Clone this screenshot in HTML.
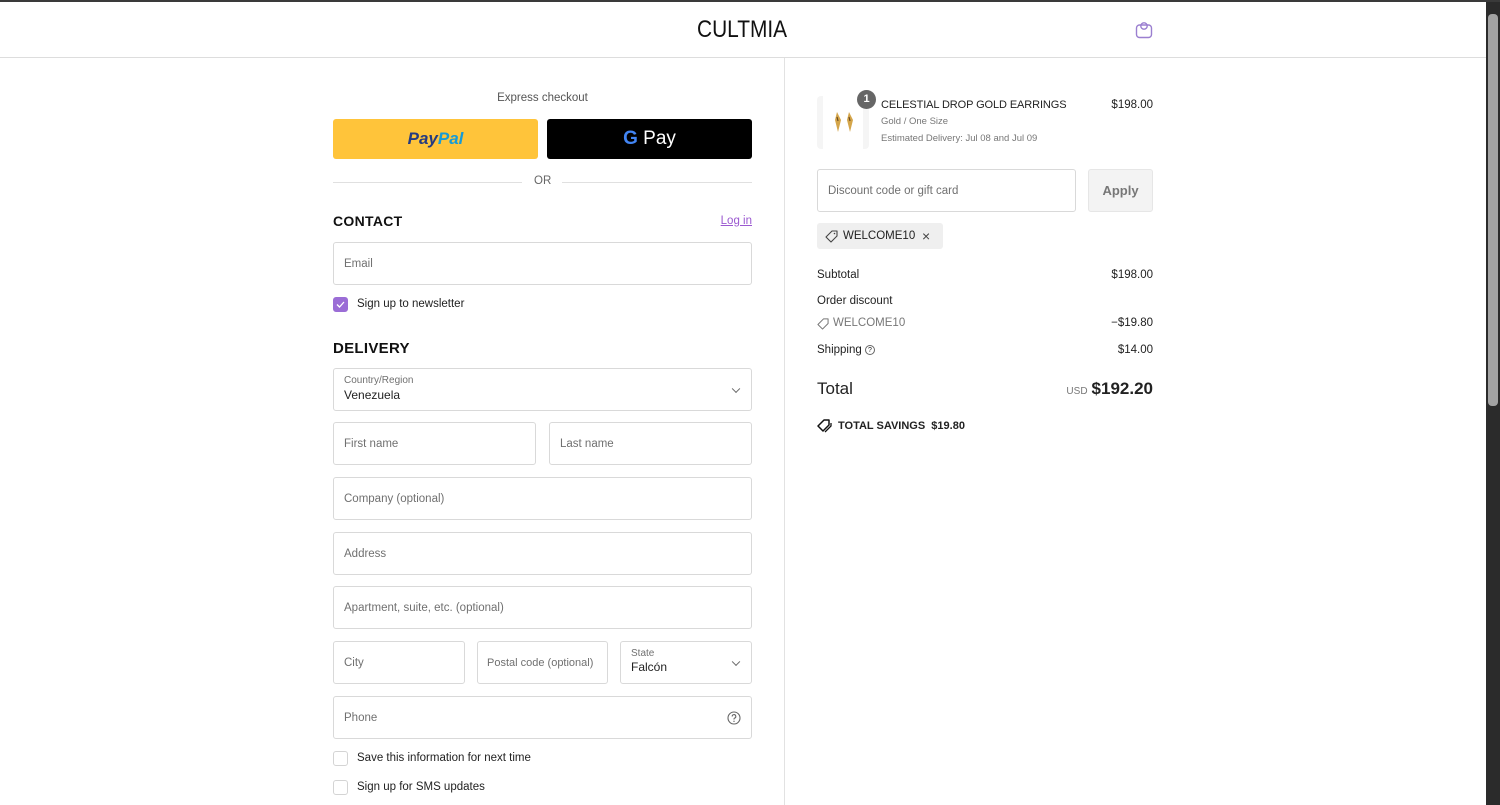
<!DOCTYPE html>
<html><head><meta charset="utf-8"><style>
*{box-sizing:border-box;margin:0;padding:0}
body{width:1500px;height:805px;overflow:hidden;background:#fff;font-family:"Liberation Sans",sans-serif;color:#222;position:relative;font-size:11.5px}
.a{position:absolute}
.inp{position:absolute;border:1px solid #d9d9d9;border-radius:3px;background:#fff;color:#707070;font-size:11.5px;padding-left:10px;display:flex;align-items:center}
.h{font-weight:bold;font-size:14px;letter-spacing:.3px;color:#111}
.cb{position:absolute;width:15px;height:15px;border:1px solid #d4d4d4;border-radius:3px}
.lbl{position:absolute;font-size:11.5px;color:#222}
.chev{position:absolute;right:12px;top:50%;width:6px;height:6px;border-right:1.3px solid #666;border-bottom:1.3px solid #666;transform:translateY(-70%) rotate(45deg)}
.r{position:absolute;font-size:11.5px;color:#222}
.rt{position:absolute;right:347px;font-size:11.5px;color:#222;text-align:right}
</style></head><body>
<div class="a" style="left:0;top:0;width:1500px;height:2px;background:#3a3a3a"></div>
<div class="a" style="left:0;top:57px;width:1486px;height:1px;background:#ddd"></div>
<div class="a" style="left:697px;top:16px;font-size:24px;color:#111;transform:scaleX(.87);transform-origin:left">CULTMIA</div>
<svg class="a" style="left:1135px;top:20px" width="18" height="19" viewBox="0 0 18 19"><rect x="1.5" y="5" width="15" height="12.5" rx="3" fill="none" stroke="#9b7fd0" stroke-width="1.4"/><circle cx="9" cy="6" r="3.2" fill="none" stroke="#9b7fd0" stroke-width="1.4"/></svg>
<div class="a" style="left:784px;top:58px;width:1px;height:747px;background:#e2e2e2"></div>
<div class="a" style="left:1486px;top:2px;width:14px;height:803px;background:#2b2b2b"></div>
<div class="a" style="left:1488px;top:14px;width:10px;height:392px;background:#a3a3a3;border-radius:4px"></div>

<div class="a" style="left:333px;top:92px;width:419px;text-align:center;color:#555;font-size:11.5px">Express checkout</div>
<div class="a" style="left:333px;top:119px;width:205px;height:40px;background:#ffc43a;border-radius:3px;text-align:center;line-height:40px;font-weight:bold;font-style:italic;font-size:17px"><span style="color:#253b80">Pay</span><span style="color:#179bd7">Pal</span></div>
<div class="a" style="left:547px;top:119px;width:205px;height:40px;background:#000;border-radius:3px;text-align:center;line-height:40px;color:#fff;font-size:19px"><span style="font-weight:bold;color:#4285f4">G</span> Pay</div>
<div class="a" style="left:333px;top:182px;width:189px;height:1px;background:#e0e0e0"></div>
<div class="a" style="left:562px;top:182px;width:190px;height:1px;background:#e0e0e0"></div>
<div class="a" style="left:534px;top:175px;color:#666;font-size:11.5px">OR</div>

<div class="a h" style="left:333px;top:213px">CONTACT</div>
<div class="a" style="right:748px;top:215px;color:#9b59d0;text-decoration:underline;font-size:11.5px">Log in</div>
<div class="inp" style="left:333px;top:242px;width:419px;height:43px">Email</div>
<div class="cb" style="left:333px;top:297px;background:#9b6dd6;border-color:#9b6dd6"><svg width="13" height="13" viewBox="0 0 13 13"><path d="M3 6.5l2.5 2.5 4.5-5" fill="none" stroke="#fff" stroke-width="1.3"/></svg></div>
<div class="lbl" style="left:357px;top:298px">Sign up to newsletter</div>

<div class="a h" style="left:333px;top:340px;font-size:15px">DELIVERY</div>
<div class="inp" style="left:333px;top:368px;width:419px;height:43px;display:block;padding-top:6px"><div style="font-size:10px;color:#707070">Country/Region</div><div style="font-size:12px;color:#222;margin-top:2px">Venezuela</div><div class="chev"></div></div>
<div class="inp" style="left:333px;top:422px;width:203px;height:43px">First name</div>
<div class="inp" style="left:549px;top:422px;width:203px;height:43px">Last name</div>
<div class="inp" style="left:333px;top:477px;width:419px;height:43px">Company (optional)</div>
<div class="inp" style="left:333px;top:532px;width:419px;height:43px">Address</div>
<div class="inp" style="left:333px;top:586px;width:419px;height:43px">Apartment, suite, etc. (optional)</div>
<div class="inp" style="left:333px;top:641px;width:132px;height:43px">City</div>
<div class="inp" style="left:477px;top:641px;width:131px;height:43px;font-size:11px;padding-left:9px">Postal code (optional)</div>
<div class="inp" style="left:620px;top:641px;width:132px;height:43px;display:block;padding-top:6px"><div style="font-size:10px;color:#707070">State</div><div style="font-size:12px;color:#222;margin-top:1px">Falcón</div><div class="chev"></div></div>
<div class="inp" style="left:333px;top:696px;width:419px;height:43px">Phone<svg style="position:absolute;right:10px;top:14px" width="14" height="14" viewBox="0 0 14 14"><circle cx="7" cy="7" r="6" fill="none" stroke="#666" stroke-width="1.1"/><path d="M5.2 5.5a1.8 1.8 0 1 1 2.4 1.6c-.5.2-.6.5-.6 1v.4" fill="none" stroke="#666" stroke-width="1.1"/><circle cx="7" cy="10.3" r=".7" fill="#666"/></svg></div>
<div class="cb" style="left:333px;top:751px"></div>
<div class="lbl" style="left:357px;top:752px">Save this information for next time</div>
<div class="cb" style="left:333px;top:780px"></div>
<div class="lbl" style="left:357px;top:781px">Sign up for SMS updates</div>

<div class="a" style="left:817px;top:96px;width:52px;height:53px;background:#f5f5f5;border-radius:4px"><div style="position:absolute;left:6px;top:0;width:40px;height:53px;background:#fff"></div>
<svg style="position:absolute;left:15px;top:15px" width="24" height="22" viewBox="0 0 24 22"><path d="M5 1l4 8-3 12-3-12z M17 1l4 8-3 12-3-12z" fill="#d4a54a"/><path d="M5 6l1 4M17 6l1 4" stroke="#6a4a20" stroke-width="1.2"/></svg></div>
<div class="a" style="left:857px;top:90px;width:19px;height:19px;border-radius:50%;background:#666;color:#fff;font-size:11px;font-weight:bold;text-align:center;line-height:19px">1</div>
<div class="r" style="left:881px;top:99px;font-size:11px;letter-spacing:-.1px">CELESTIAL DROP GOLD EARRINGS</div>
<div class="r" style="left:881px;top:116px;font-size:9.5px;color:#777">Gold / One Size</div>
<div class="r" style="left:881px;top:133px;font-size:9.5px;color:#777">Estimated Delivery: Jul 08 and Jul 09</div>
<div class="rt" style="top:99px">$198.00</div>

<div class="inp" style="left:817px;top:169px;width:259px;height:43px">Discount code or gift card</div>
<div class="a" style="left:1088px;top:169px;width:65px;height:43px;background:#f3f3f3;border:1px solid #e6e6e6;border-radius:3px;text-align:center;line-height:41px;font-weight:bold;color:#777;font-size:13px">Apply</div>
<div class="a" style="left:817px;top:223px;width:126px;height:26px;background:#efefef;border-radius:3px;font-size:11.5px;line-height:26px;padding-left:26px">WELCOME10<span style="position:absolute;left:105px;top:0;font-size:14px;color:#444">×</span>
<svg style="position:absolute;left:8px;top:7px" width="13" height="13" viewBox="0 0 13 13"><path d="M7 1h5v5l-6 6-5-5z" fill="none" stroke="#444" stroke-width="1.1" stroke-linejoin="round"/><circle cx="9.5" cy="3.5" r=".8" fill="#444"/></svg></div>

<div class="r" style="left:817px;top:269px">Subtotal</div><div class="rt" style="top:269px">$198.00</div>
<div class="r" style="left:817px;top:295px">Order discount</div>
<svg class="a" style="left:817px;top:318px" width="12" height="12" viewBox="0 0 13 13"><path d="M7 1h5v5l-6 6-5-5z" fill="none" stroke="#777" stroke-width="1.1" stroke-linejoin="round"/></svg>
<div class="r" style="left:833px;top:317px;color:#777">WELCOME10</div><div class="rt" style="top:317px">−$19.80</div>
<div class="r" style="left:817px;top:344px">Shipping <span style="display:inline-block;width:10px;height:10px;border:1px solid #666;border-radius:50%;font-size:7px;text-align:center;line-height:9px;vertical-align:middle">?</span></div><div class="rt" style="top:344px">$14.00</div>
<div class="r" style="left:817px;top:379px;font-size:17px">Total</div>
<div class="rt" style="top:379px;font-size:17px;font-weight:bold"><span style="font-size:10px;font-weight:normal;color:#777;margin-right:4px">USD</span>$192.20</div>
<svg class="a" style="left:817px;top:419px" width="15" height="14" viewBox="0 0 15 14"><path d="M7 1h5v5l-6 6-5-5z" fill="none" stroke="#111" stroke-width="1.5" stroke-linejoin="round"/><path d="M14 4v3l-6 6" fill="none" stroke="#111" stroke-width="1.3"/></svg>
<div class="r" style="left:838px;top:420px;font-weight:bold;font-size:11px">TOTAL SAVINGS&nbsp; $19.80</div>
</body></html>
